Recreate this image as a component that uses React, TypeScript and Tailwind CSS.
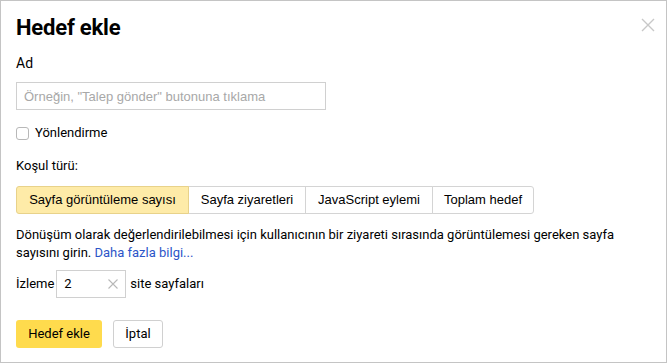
import { useState } from "react";

const tabs = [
  { label: "Sayfa görüntüleme sayısı", w: "w-[173px]" },
  { label: "Sayfa ziyaretleri", w: "w-[118px]" },
  { label: "JavaScript eylemi", w: "w-[128px]" },
  { label: "Toplam hedef", w: "w-[102px]" },
];

const ys = { fontFamily: "Roboto, 'Noto Sans', sans-serif" };
const arial = { fontFamily: "'Liberation Sans', Arial, sans-serif" };

const App = () => {
  const [active, setActive] = useState(0);
  const [pages, setPages] = useState("2");

  return (
    <div className="w-[667px] h-[363px] bg-white border border-[#c4c4c4] text-black" style={ys}>
      <div className="flex justify-between pl-[15px] pr-[10px] pt-[13px]">
        <h1 className="text-[22px] font-bold leading-[28px] tracking-[-0.2px]">Hedef ekle</h1>
        <button type="button" className="mt-[4px] mr-[1px] w-[14px] h-[14px] text-[#c8c8c8]">
          <svg viewBox="0 0 14 14" width="14" height="14" stroke="currentColor" strokeWidth="1.4">
            <path d="M1 1L13 13M13 1L1 13" />
          </svg>
        </button>
      </div>

      <div className="px-[15px]">
        <div className="mt-[12px] text-[14px] leading-[18px]">Ad</div>
        <input
          className="mt-[10px] w-[310px] h-[28px] border border-[#d0d0d0] px-[7px] text-[13px] outline-none placeholder:text-[#a8a8a8]"
          style={arial}
          placeholder={'Örneğin, "Talep gönder" butonuna tıklama'}
        />

        <label className="mt-[15px] flex items-center gap-[6px] text-[13px] leading-[16px]">
          <span className="w-[13px] h-[13px] border border-[#b8b8b8] rounded-[3px] bg-white" />
          Yönlendirme
        </label>

        <div className="mt-[17px] text-[13px] leading-[16px]">Koşul türü:</div>

        <div className="mt-[12px] flex" style={arial}>
          {tabs.map((t, i) => (
            <button
              key={t.label}
              type="button"
              onClick={() => setActive(i)}
              className={
                t.w +
                " h-[28px] text-[13px] border -ml-px first:ml-0 first:rounded-l-[3px] last:rounded-r-[3px] " +
                (i === active
                  ? "bg-[#feeba8] border-[#e8d28a] relative z-10"
                  : "bg-white border-[#d4d4d4]")
              }
            >
              {t.label}
            </button>
          ))}
        </div>

        <p className="mt-[12px] text-[13px] leading-[18px] w-[620px]">
          Dönüşüm olarak değerlendirilebilmesi için kullanıcının bir ziyareti sırasında görüntülemesi gereken sayfa
          sayısını girin. <a className="text-[#2c55c8]" href="#">Daha fazla bilgi...</a>
        </p>

        <div className="mt-[8px] flex items-center gap-[2px] text-[13px]">
          <span>İzleme</span>
          <div className="w-[70px] h-[28px] border border-[#d0d0d0] flex items-center pl-[7px] pr-[7px]">
            <input
              className="w-full outline-none text-[13px]"
              value={pages}
              onChange={(e) => setPages(e.target.value)}
            />
            <button type="button" onClick={() => setPages("")} className="text-[#b8b8b8] shrink-0">
              <svg viewBox="0 0 10 10" width="10" height="10" stroke="currentColor" strokeWidth="1.1">
                <path d="M0.5 0.5L9.5 9.5M9.5 0.5L0.5 9.5" />
              </svg>
            </button>
          </div>
          <span className="ml-[2px]">site sayfaları</span>
        </div>

        <div className="mt-[22px] flex gap-[11px] text-[13px]">
          <button type="button" className="h-[28px] w-[86px] rounded-[3px] bg-[#ffdb4d]">
            Hedef ekle
          </button>
          <button type="button" className="h-[28px] w-[50px] rounded-[3px] border border-[#d0d0d0] bg-white">
            İptal
          </button>
        </div>
      </div>
    </div>
  );
};

export default App;
